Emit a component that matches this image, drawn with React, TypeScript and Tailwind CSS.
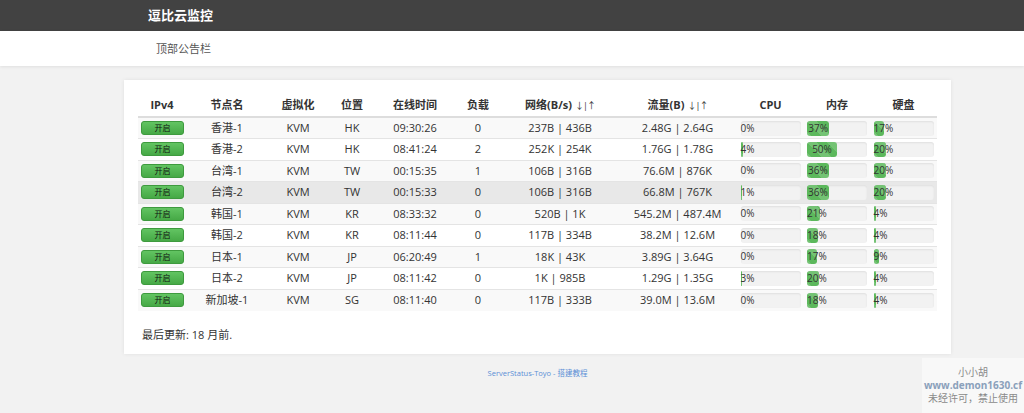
import React from 'react';

type Node = {
  name: string;
  loc: string;
  uptime: string;
  load: number;
  net: string;
  traffic: string;
  cpu: number;
  mem: number;
  hdd: number;
};

const NODES: Node[] = [
  { name: '香港-1', loc: 'HK', uptime: '09:30:26', load: 0, net: '237B | 436B', traffic: '2.48G | 2.64G', cpu: 0, mem: 37, hdd: 17 },
  { name: '香港-2', loc: 'HK', uptime: '08:41:24', load: 2, net: '252K | 254K', traffic: '1.76G | 1.78G', cpu: 4, mem: 50, hdd: 20 },
  { name: '台湾-1', loc: 'TW', uptime: '00:15:35', load: 1, net: '106B | 316B', traffic: '76.6M | 876K', cpu: 0, mem: 36, hdd: 20 },
  { name: '台湾-2', loc: 'TW', uptime: '00:15:33', load: 0, net: '106B | 316B', traffic: '66.8M | 767K', cpu: 1, mem: 36, hdd: 20 },
  { name: '韩国-1', loc: 'KR', uptime: '08:33:32', load: 0, net: '520B | 1K', traffic: '545.2M | 487.4M', cpu: 0, mem: 21, hdd: 4 },
  { name: '韩国-2', loc: 'KR', uptime: '08:11:44', load: 0, net: '117B | 334B', traffic: '38.2M | 12.6M', cpu: 0, mem: 18, hdd: 4 },
  { name: '日本-1', loc: 'JP', uptime: '06:20:49', load: 1, net: '18K | 43K', traffic: '3.89G | 3.64G', cpu: 0, mem: 17, hdd: 9 },
  { name: '日本-2', loc: 'JP', uptime: '08:11:42', load: 0, net: '1K | 985B', traffic: '1.29G | 1.35G', cpu: 3, mem: 20, hdd: 4 },
  { name: '新加坡-1', loc: 'SG', uptime: '08:11:40', load: 0, net: '117B | 333B', traffic: '39.0M | 13.6M', cpu: 0, mem: 18, hdd: 4 },
];

const font = { fontFamily: '"Open Sans", "Noto Sans CJK SC", sans-serif' };

const Arrows = () => (
  <span className="ml-[3px] text-[9px] font-normal tracking-[-1px]">↓|↑</span>
);

const Bar: React.FC<{ value: number }> = ({ value }) => (
  <div className="mx-auto h-[15px] w-[60px] rounded-[3px] bg-[#f2f2f2] shadow-[inset_0_1px_2px_rgba(0,0,0,0.08)]">
    <div
      className="h-full whitespace-nowrap rounded-[3px] bg-[#5cb85c] bg-[linear-gradient(45deg,rgba(255,255,255,0.15)_25%,transparent_25%,transparent_50%,rgba(255,255,255,0.15)_50%,rgba(255,255,255,0.15)_75%,transparent_75%,transparent)] bg-[length:20px_20px] text-center text-[10px] leading-[15px] text-[#333]"
      style={{ width: `${value}%` }}
    >
      {value}%
    </div>
  </div>
);

export default function App() {
  return (
    <div className="relative min-h-[413px] bg-[#f2f2f2] text-[#333]" style={font}>
      {/* Top bar */}
      <div className="h-[31px] bg-[#424242] pl-[148px] text-[13px] font-bold leading-[31px] text-white">
        逗比云监控
      </div>
      <div className="h-[35px] bg-white pl-[156px] text-[11px] leading-[35px] text-[#555] shadow-[0_1px_3px_rgba(0,0,0,0.08)]">
        顶部公告栏
      </div>

      {/* Card */}
      <div className="ml-[124px] mt-[14px] h-[274px] w-[827px] bg-white px-[14px] pt-[15px] shadow-[0_0_4px_rgba(0,0,0,0.08)]">
        <table className="w-[799px] table-fixed border-collapse whitespace-nowrap text-[11px]">
          <colgroup>
            <col className="w-[48px]" />
            <col className="w-[82px]" />
            <col className="w-[60px]" />
            <col className="w-[48px]" />
            <col className="w-[78px]" />
            <col className="w-[48px]" />
            <col className="w-[116px]" />
            <col className="w-[119px]" />
            <col className="w-[67px]" />
            <col className="w-[66px]" />
            <col className="w-[67px]" />
          </colgroup>
          <thead>
            <tr className="h-[22px] border-b-2 border-[#ddd] font-bold">
              <th className="text-center">IPv4</th>
              <th className="text-center">节点名</th>
              <th className="text-center">虚拟化</th>
              <th className="text-center">位置</th>
              <th className="text-center">在线时间</th>
              <th className="text-center">负载</th>
              <th className="text-center">网络(B/s)<Arrows /></th>
              <th className="text-center">流量(B)<Arrows /></th>
              <th className="text-center">CPU</th>
              <th className="text-center">内存</th>
              <th className="text-center">硬盘</th>
            </tr>
          </thead>
          <tbody>
            {NODES.map((n, i) => (
              <tr
                key={n.name}
                className={`h-[21.5px] border-t border-[#e4e4e4] ${
                  i === 3 ? 'bg-[#e8e8e8]' : i % 2 === 0 ? 'bg-[#f9f9f9]' : 'bg-white'
                }`}
              >
                <td className="pl-[3px]">
                  <div className="flex h-[14px] w-[43px] items-center justify-center rounded-[3px] border border-[#3e9a3e] bg-[linear-gradient(#62c462,#46a946)] text-[8px] leading-none text-[#111]">
                    开启
                  </div>
                </td>
                <td className="text-center">{n.name}</td>
                <td className="text-center">KVM</td>
                <td className="text-center">{n.loc}</td>
                <td className="text-center">{n.uptime}</td>
                <td className="text-center">{n.load}</td>
                <td className="text-center">{n.net}</td>
                <td className="text-center">{n.traffic}</td>
                <td><Bar value={n.cpu} /></td>
                <td><Bar value={n.mem} /></td>
                <td><Bar value={n.hdd} /></td>
              </tr>
            ))}
          </tbody>
        </table>
        <p className="mt-[16px] pl-[4px] text-[11px]">最后更新: 18 月前.</p>
      </div>

      {/* Footer */}
      <div className="ml-[124px] mt-[14px] w-[827px] text-center text-[7.5px] text-[#5b8fd6]">
        ServerStatus-Toyo - 搭建教程
      </div>

      {/* Watermark */}
      <div className="absolute bottom-0 right-0 flex h-[55px] w-[102px] flex-col items-center justify-center bg-[#f8f8f8]/90 text-[10px] leading-[13px]">
        <span className="text-[#8a8a8a]">小小胡</span>
        <span className="font-bold text-[#8aa0bb]">www.demon1630.cf</span>
        <span className="text-[#8a8a8a]">未经许可，禁止使用</span>
      </div>
    </div>
  );
}
